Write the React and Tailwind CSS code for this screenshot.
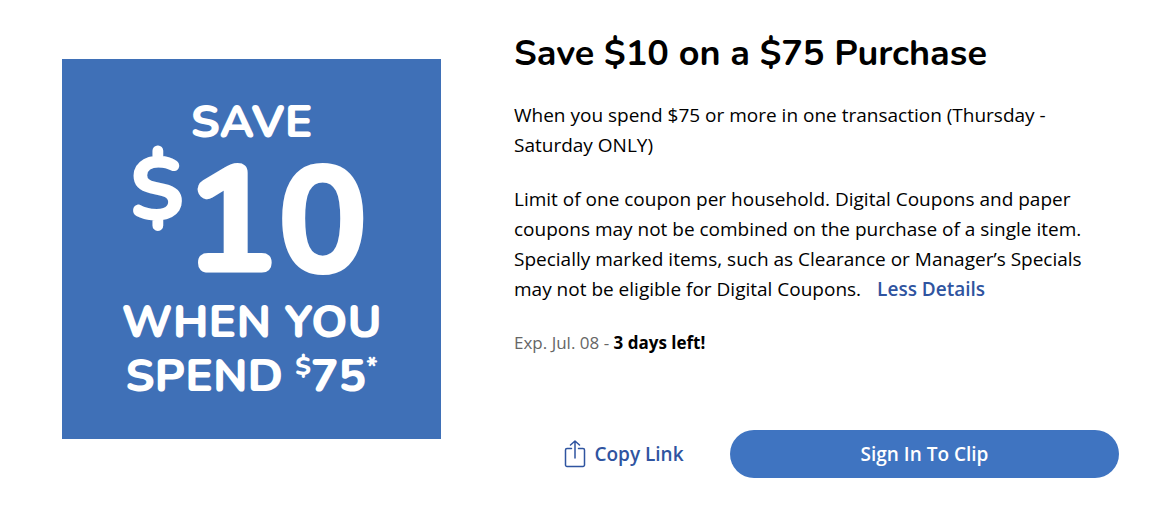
import React from 'react';

const coupon = {
  title: 'Save $10 on a $75 Purchase',
  summary: 'When you spend $75 or more in one transaction (Thursday - Saturday ONLY)',
  terms:
    'Limit of one coupon per household. Digital Coupons and paper coupons may not be combined on the purchase of a single item. Specially marked items, such as Clearance or Manager’s Specials may not be eligible for Digital Coupons.',
  expires: 'Exp. Jul. 08',
  remaining: '3 days left!',
};

function CouponArt() {
  return (
    <div className="flex h-[380px] w-[379px] shrink-0 flex-col items-center bg-[#3f70b7] pt-9 font-[Nunito,sans-serif] font-extrabold text-white">
      <div className="text-[46px] leading-[54px]">SAVE</div>
      <div className="flex items-start pr-1">
        <span className="text-[90px] leading-[84px]">$</span>
        <span className="text-[154px] leading-[146px]">10</span>
      </div>
      <div className="text-[46px] leading-[54px]">WHEN YOU</div>
      <div className="flex items-start gap-3 text-[46px] leading-[54px]">
        <span>SPEND</span>
        <span className="flex items-start">
          <span className="text-[26px] leading-9">$</span>
          <span>75</span>
          <span className="text-[26px] leading-9">*</span>
        </span>
      </div>
    </div>
  );
}

function ShareIcon() {
  return (
    <svg width="22" height="28" viewBox="0 0 22 28" fill="none" stroke="#2f54a0" strokeWidth="1.5" strokeLinecap="round" strokeLinejoin="round" aria-hidden="true">
      <path d="M7.5 8.5H3A1.5 1.5 0 0 0 1.500 10V25A1.500 1.500 0 0 0 3 26.500H19A1.500 1.500 0 0 0 20.500 25V10A1.500 1.500 0 0 0 19 8.500H14.500" />
      <path d="M11 18V1.500M6.500 5L11 1L15.500 5" />
    </svg>
  );
}

export default function App() {
  return (
    <main className="flex bg-white pt-8 pr-[54px] pb-10 pl-[62px] font-['Open_Sans',sans-serif] text-black">
      <div className="pt-[27px]">
        <CouponArt />
      </div>
      <section className="ml-[73px] flex-1">
        <h1 className="font-[Nunito,sans-serif] text-[36px] leading-[44px] font-bold">{coupon.title}</h1>
        <p className="mt-6 text-[19px] leading-[30px]">{coupon.summary}</p>
        <p className="mt-6 text-[19px] leading-[30px]">
          {coupon.terms}
          <a href="#details" className="ml-4 font-semibold text-[#2f54a0]">Less Details</a>
        </p>
        <p className="mt-6 text-[17px] leading-[30px] text-[#666]">
          {coupon.expires} - <strong className="text-black">{coupon.remaining}</strong>
        </p>
        <div className="mt-[72px] flex items-center">
          <button type="button" className="flex w-[216px] items-center justify-center gap-2 pl-5 pr-4 text-[19px] font-semibold text-[#2f54a0]">
            <ShareIcon />
            Copy Link
          </button>
          <button type="button" className="h-12 flex-1 rounded-full bg-[#3f74c1] text-[19px] font-semibold text-white">
            Sign In To Clip
          </button>
        </div>
      </section>
    </main>
  );
}
